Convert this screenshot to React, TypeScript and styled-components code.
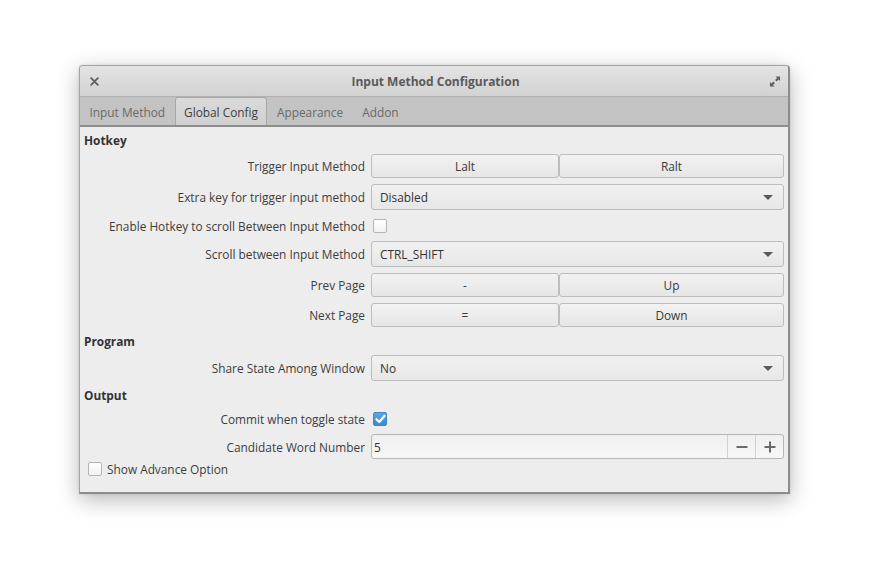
import React from "react";
import styled, { createGlobalStyle } from "styled-components";

const Global = createGlobalStyle`
  html, body { margin: 0; padding: 0; background: #ffffff; }
  body { font-family: "Open Sans", "Noto Sans", sans-serif; font-size: 11.85px; color: #3b3b3b; }
  * { box-sizing: border-box; }
`;

const Page = styled.div`
  width: 869px;
  height: 587px;
  padding: 65px 0 0 79px;
`;

const Window = styled.div`
  width: 711px;
  height: 429px;
  display: flex;
  flex-direction: column;
  border: 1px solid #a4a4a4;
  border-right: 2px solid #8c8c8c;
  border-bottom: 2px solid #8c8c8c;
  border-radius: 4px 4px 0 0;
  background: #ededed;
  box-shadow: 0 6px 22px rgba(0, 0, 0, 0.28), 0 0 3px rgba(0, 0, 0, 0.12);
  overflow: hidden;
`;

const TitleBar = styled.div`
  height: 31px;
  flex: none;
  display: flex;
  align-items: center;
  justify-content: space-between;
  padding: 0 7px 0 8px;
  background: linear-gradient(#e4e4e4, #d2d2d2);
  border-bottom: 1px solid #b0b0b0;
`;

const Title = styled.div`
  font-weight: 700;
  font-size: 12px;
  color: #5a5a5a;
  margin-left: 2px;
`;

const IconBtn = styled.div`
  width: 12px;
  height: 12px;
  display: flex;
  align-items: center;
  justify-content: center;
`;

const TabBar = styled.div`
  height: 30px;
  flex: none;
  display: flex;
  align-items: flex-end;
  background: #c3c3c3;
  border-bottom: 2px solid #8e8e8e;
`;

const Tab = styled.div<{ $active?: boolean }>`
  height: 28px;
  display: flex;
  align-items: center;
  padding: 1px 8.5px 0;
  color: ${(p) => (p.$active ? "#3e3e3e" : "#6a6a6a")};
  background: ${(p) => (p.$active ? "linear-gradient(#dadada, #d0d0d0)" : "transparent")};
  border: 1px solid ${(p) => (p.$active ? "#a8a8a8" : "transparent")};
  border-bottom: none;
  border-radius: 3px 3px 0 0;
  white-space: nowrap;
`;

const Content = styled.div`
  flex: 1;
  padding: 5px 4px 0 4px;
`;

const Form = styled.div`
  display: grid;
  grid-template-columns: 1fr 413px;
  column-gap: 6px;
  row-gap: 6px;
  align-items: center;
`;

const Section = styled.div`
  grid-column: 1 / -1;
  height: 16px;
  line-height: 16px;
  font-weight: 700;
  color: #333;
`;

const Label = styled.div`
  text-align: right;
  color: #3d3d3d;
  white-space: nowrap;
`;

const Pair = styled.div`
  display: grid;
  grid-template-columns: 188px 1fr;
`;

const Button = styled.div`
  height: 24px;
  display: flex;
  align-items: center;
  justify-content: center;
  border: 1px solid #bdbdbd;
  border-radius: 3px;
  background: linear-gradient(#f2f2f2, #e6e6e6);
  color: #3b3b3b;
`;

const Combo = styled.div`
  height: 26px;
  display: flex;
  align-items: center;
  justify-content: space-between;
  padding: 0 10px 0 8px;
  border: 1px solid #bdbdbd;
  border-radius: 3px;
  background: linear-gradient(#f1f1f1, #e7e7e7);
  color: #333;
`;

const Arrow = styled.div`
  width: 0;
  height: 0;
  border-left: 5px solid transparent;
  border-right: 5px solid transparent;
  border-top: 5px solid #5a5a5a;
`;

const CheckRow = styled.div`
  height: 19px;
  display: flex;
  align-items: center;
  padding-left: 2px;
`;

const Box = styled.div<{ $on?: boolean }>`
  width: 14px;
  height: 14px;
  border-radius: 2px;
  border: 1px solid ${(p) => (p.$on ? "#3a87c8" : "#b4b4b4")};
  background: ${(p) => (p.$on ? "linear-gradient(#5aa6e6, #3a8ad2)" : "linear-gradient(#ffffff, #f2f2f2)")};
  display: flex;
  align-items: center;
  justify-content: center;
  flex: none;
`;

const Spin = styled.div`
  height: 25px;
  display: flex;
  align-items: stretch;
  border: 1px solid #b6b6b6;
  border-radius: 3px;
  background: linear-gradient(#f0f0f0, #f7f7f7);
`;

const SpinText = styled.div`
  flex: 1;
  display: flex;
  align-items: center;
  padding-left: 2px;
  color: #333;
`;

const SpinBtn = styled.div`
  width: 28px;
  display: flex;
  align-items: center;
  justify-content: center;
  border-left: 1px solid #d2d2d2;
`;

const Advance = styled.div`
  display: flex;
  align-items: center;
  gap: 5px;
  margin-top: 2px;
  padding-left: 4px;
  height: 15px;
  color: #3d3d3d;
`;

const Check = () => (
  <svg width="11" height="10" viewBox="0 0 11 10">
    <path d="M1.5 5.2 L4.3 8 L9.6 1.8" fill="none" stroke="#fff" strokeWidth="2.2" strokeLinecap="round" strokeLinejoin="round" />
  </svg>
);

export default function App() {
  return (
    <>
      <Global />
      <Page>
        <Window>
          <TitleBar>
            <IconBtn>
              <svg width="9" height="9" viewBox="0 0 9 9">
                <path d="M1.2 1.2 L7.8 7.8 M7.8 1.2 L1.2 7.8" stroke="#606060" strokeWidth="1.9" strokeLinecap="round" />
              </svg>
            </IconBtn>
            <Title>Input Method Configuration</Title>
            <IconBtn>
              <svg width="13" height="13" viewBox="0 0 13 13">
                <path d="M7 1 H12 V6 L10.3 4.3 L8.2 6.4 L6.6 4.8 L8.7 2.7 Z" fill="#606060" />
                <path d="M6 12 H1 V7 L2.7 8.7 L4.8 6.6 L6.4 8.2 L4.3 10.3 Z" fill="#606060" />
              </svg>
            </IconBtn>
          </TitleBar>
          <TabBar>
            <Tab>Input Method</Tab>
            <Tab $active>Global Config</Tab>
            <Tab>Appearance</Tab>
            <Tab>Addon</Tab>
          </TabBar>
          <Content>
            <Form>
              <Section>Hotkey</Section>
              <Label>Trigger Input Method</Label>
              <Pair>
                <Button>Lalt</Button>
                <Button>Ralt</Button>
              </Pair>
              <Label>Extra key for trigger input method</Label>
              <Combo>
                Disabled
                <Arrow />
              </Combo>
              <Label>Enable Hotkey to scroll Between Input Method</Label>
              <CheckRow>
                <Box />
              </CheckRow>
              <Label>Scroll between Input Method</Label>
              <Combo>
                CTRL_SHIFT
                <Arrow />
              </Combo>
              <Label>Prev Page</Label>
              <Pair>
                <Button>-</Button>
                <Button>Up</Button>
              </Pair>
              <Label>Next Page</Label>
              <Pair>
                <Button>=</Button>
                <Button>Down</Button>
              </Pair>
              <Section>Program</Section>
              <Label>Share State Among Window</Label>
              <Combo>
                No
                <Arrow />
              </Combo>
              <Section>Output</Section>
              <Label>Commit when toggle state</Label>
              <CheckRow>
                <Box $on>
                  <Check />
                </Box>
              </CheckRow>
              <Label>Candidate Word Number</Label>
              <Spin>
                <SpinText>5</SpinText>
                <SpinBtn>
                  <svg width="12" height="12" viewBox="0 0 12 12">
                    <path d="M0.5 6 H11.5" stroke="#6a6a6a" strokeWidth="2" />
                  </svg>
                </SpinBtn>
                <SpinBtn>
                  <svg width="12" height="12" viewBox="0 0 12 12">
                    <path d="M0.5 6 H11.5 M6 0.5 V11.5" stroke="#6a6a6a" strokeWidth="2" />
                  </svg>
                </SpinBtn>
              </Spin>
            </Form>
            <Advance>
              <Box />
              Show Advance Option
            </Advance>
          </Content>
        </Window>
      </Page>
    </>
  );
}
